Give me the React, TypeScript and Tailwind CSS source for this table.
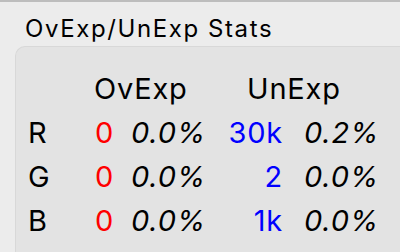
import React from 'react';

type Row = { ch: string; ov: string; ovPct: string; un: string; unPct: string };

const rows: Row[] = [
  { ch: 'R', ov: '0', ovPct: '0.0%', un: '30k', unPct: '0.2%' },
  { ch: 'G', ov: '0', ovPct: '0.0%', un: '2', unPct: '0.0%' },
  { ch: 'B', ov: '0', ovPct: '0.0%', un: '1k', unPct: '0.0%' },
];

export default function App() {
  return (
    <div
      className="w-[400px] h-[252px] overflow-hidden bg-[#ececec] border-t-2 border-[#bdbdbd] text-black"
      style={{ fontFamily: 'Inter, "Liberation Sans", sans-serif' }}
    >
      <div className="pl-[25px] pt-[12px] h-[44px] text-[24px] leading-[30px] tracking-[1.6px]">OvExp/UnExp Stats</div>

      {/* stats panel runs off the right and bottom edges */}
      <div className="ml-[15px] w-[420px] h-[240px] rounded-tl-[10px] bg-[#e3e3e3] border-t border-l border-[#d8d8d8] pl-[12px] pt-[20px] text-[29px] leading-[44px] tracking-[0.8px]">
        <div className="flex">
          <div className="w-[66px]" />
          <div className="w-[153px]">OvExp</div>
          <div>UnExp</div>
        </div>
        {rows.map((r) => (
          <div key={r.ch} className="flex">
            <div className="w-[50px]">{r.ch}</div>
            <div className="w-[36px] text-right text-[#ff0000]">{r.ov}</div>
            <div className="w-[17px]" />
            <div className="w-[75px] italic">{r.ovPct}</div>
            <div className="w-[77px] text-right text-[#0000ff]">{r.un}</div>
            <div className="w-[21px]" />
            <div className="italic">{r.unPct}</div>
          </div>
        ))}
      </div>
    </div>
  );
}
